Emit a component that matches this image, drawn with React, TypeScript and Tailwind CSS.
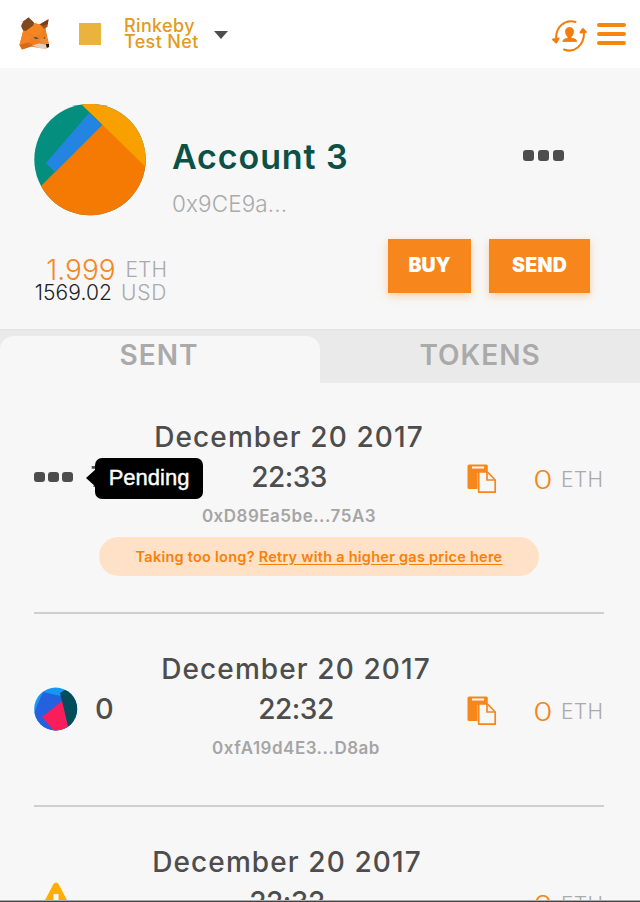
import type { ReactNode } from 'react'

type TxProps = {
    icon: ReactNode,
    leftWidth: string,
    time: string,
    hash: string,
    showRetry?: boolean,
    hideCopy?: boolean
}

const Fox = () => (
    <svg width="32" height="34" viewBox="0 0 32 34">
        <path d="M4.300 13 14 6 21 7.300 26 9 27.500 16 30 27 29.500 30.500 27 31.500 20 31 12 29.500 3 32.500.500 28Z" fill="#ee7f22" />
        <path d="M2 9 4.300 4.300 9.500.3 15 5.500 14.500 8.500 7 14 4 13.500Z" fill="#81481f" />
        <path d="M29.500 2.300 28.500 9.500 25.700 12 20.500 7.500Z" fill="#a2531f" />
        <path d="M29.500 2.300 28.800 7 25 8.500 20.500 7.500Z" fill="#794018" />
        <path d="M15 6 20.500 7.500 24 11 22 17 15 19 7 14 14.500 8.500Z" fill="#f6861f" />
        <path d="M4.300 13.500 9 15 13 20 9 27 .5 28Z" fill="#f48423" />
        <path d="M.5 28 9 25.500 15 28.500 3 32.500Z" fill="#d8691d" />
        <path d="M20 23 24 20 27.500 20 29.500 27 24 27Z" fill="#f58a2c" />
        <path d="M13 28.500 20 26.500 27 27.500 27.500 31.500 20 31Z" fill="#dccfc5" />
        <path d="M14.800 20 18 20.200 19.500 22 16 22Z" fill="#4b5261" />
        <path d="M24.500 20.500 26.500 20.200 26 21.700 24.500 21.500Z" fill="#4b5261" />
        <path d="M26.800 27 30 27 30 30 28 30.800Z" fill="#171717" />
    </svg>
)

const SwitchAccountIcon = () => (
    <svg width="36" height="34" viewBox="0 0 36 34" fill="none" stroke="#f37d0b" strokeWidth="2" strokeLinecap="round" strokeLinejoin="round">
        <path d="M23.500 3C13-.200 3.500 8 4.200 20" />
        <path d="M1 20.500 4.300 23.500 6.500 19.500Z" fill="#f37d0b" />
        <path d="M12 30.500C22 34.500 32 26.500 32 14" />
        <path d="M28.500 13.500 30.800 10 33.800 13Z" fill="#f37d0b" />
        <path d="M17.500 8.500C14.500 8.500 13.300 10.500 13.500 13 13.700 15.500 15 17.500 16 18V19.200L12.500 20Q11 20.700 10.800 22.500H24.700Q24.500 20.700 23 20L19 19.200V18C20 17.500 21.300 15.500 21.500 13 21.700 10.500 20.500 8.500 17.500 8.500Z" fill="#f37d0b" strokeWidth=".8" />
    </svg>
)

const AccountAvatar = () => (
    <svg width="112" height="112" viewBox="0 0 112 112">
        <clipPath id="account">
            <circle cx="56" cy="55.500" r="55.700" />
        </clipPath>
        <g clipPath="url(#account)">
            <rect width="112" height="112" fill="#048e7e" />
            <path d="M7 82 74 15 130 71V120H0Z" fill="#f47a04" />
            <path d="M55 9 68 21 21 68 12 59Z" fill="#2484e1" />
            <path d="M46 -1 120 71V-1Z" fill="#f7a000" />
        </g>
    </svg>
)

const TxAvatar = () => (
    <svg width="44" height="44" viewBox="0 0 44 44">
        <clipPath id="tx">
            <circle cx="21.700" cy="22" r="21.500" />
        </clipPath>
        <g clipPath="url(#tx)">
            <rect width="44" height="44" fill="#1598f2" />
            <path d="M9 5 27 9 44 44H0V26Z" fill="#2560df" />
            <path d="M26 6 36 0H44V36L34 40Z" fill="#034d5a" />
            <path d="M28 14 34 40 34 46H22L8 30Z" fill="#fa1d5b" />
        </g>
    </svg>
)

const CopyIcon = () => (
    <svg width="30" height="30" viewBox="0 0 30 30">
        <path d="M2 .5H19.500Q20.800.500 20.800 2V8H12Q10.500 8 10.500 9.500V25H2Q.500 25 .500 23.500V2Q.500.500 2 .5Z" fill="#f7861c" />
        <path d="M5 2.500H17V4.500H5Z" fill="#f7f7f7" />
        <path d="M11.700 8H20.500L28.200 16V28.200H11.700Z" fill="#f7f7f7" stroke="#f7861c" strokeWidth="1.700" strokeLinejoin="round" />
        <path d="M20 8V16H28.200" fill="none" stroke="#f7861c" strokeWidth="1.700" />
    </svg>
)

const Dots = ({ small }: { small?: boolean }) => (
    <div className={small ? 'flex gap-[3.500px]' : 'flex gap-[4px]'}>
        {[0, 1, 2].map((dot) => (
            <span key={dot} className={small ? 'size-[10.500px] rounded-[3px] bg-[#4d4d4d]' : 'size-[11px] rounded-[3px] bg-[#4d4d4d]'} />
        ))}
    </div>
)

const Transaction = ({ icon, leftWidth, time, hash, showRetry, hideCopy }: TxProps) => (
    <div className="mr-[36px] ml-[34px] h-[193px] shrink-0 border-b-2 border-[#cfcfcf] pt-[35px] data-[retry=true]:h-[231px] data-[retry=true]:pt-[34px]" data-retry={!!showRetry}>
        <div className="flex">
            <div className={`${leftWidth} flex h-[120px] shrink-0 items-center`}>{icon}</div>
            <div className="flex w-[280px] shrink-0 flex-col items-center whitespace-nowrap font-medium text-[#4d4d4d]">
                <span className="text-[28px] leading-10 tracking-[1.1px]">December 20 2017</span>
                <span className="text-[28px] leading-10 tracking-[-0.5px]">{time}</span>
                <span className="text-[17px] leading-[39px] font-semibold tracking-[0.5px] text-[#a5a5a5]">{hash}</span>
            </div>
            <div className="ml-auto flex h-[123px] items-center">
                {!hideCopy && <CopyIcon />}
                <span className="mt-[2px] ml-[37px] w-[18px] scale-x-120 text-center text-[26px] font-light text-[#f7861c]">0</span>
                <span className="mt-[2px] ml-[9px] w-[43px] text-[21px] font-light tracking-[0.3px] text-[#aaa]">ETH</span>
            </div>
        </div>
        {showRetry && <div className="-mt-[3px] ml-[65px] flex h-[39px] w-[440px] items-center justify-center rounded-full bg-[#ffe1c7] text-[14.500px] font-semibold tracking-[0.25px] whitespace-nowrap text-[#f98008]">
            Taking too long?&nbsp;<span className="underline underline-offset-2">Retry with a higher gas price here</span>
        </div>}
    </div>
)

export default function App() {
    return (
        <div className="flex h-[902px] w-[640px] flex-col overflow-hidden bg-[#f7f7f7] font-['Inter',sans-serif]">
            <header className="flex h-[68px] shrink-0 items-center bg-white pl-[19px]">
                <Fox />
                <div className="ml-7 size-[22px] bg-[#e9b33e]" />
                <div className="ml-[23px] w-[78px] text-[18px] leading-4 font-medium tracking-[0.35px] whitespace-nowrap text-[#e39a20]">
                    Rinkeby<br />Test Net
                </div>
                <div className="mt-[2px] ml-3 h-0 w-0 border-x-[7px] border-t-8 border-x-transparent border-t-[#4d4d4d]" />
                <div className="mt-1 ml-auto"><SwitchAccountIcon /></div>
                <div className="mr-[14px] ml-[9px] flex w-[29px] flex-col gap-[5.500px]">
                    <span className="h-[3.500px] rounded bg-[#f7860f]" />
                    <span className="h-[3.500px] rounded bg-[#f7860f]" />
                    <span className="h-[3.500px] rounded bg-[#f7860f]" />
                </div>
            </header>
            <section className="h-[261px] shrink-0 pt-9 pl-[34px]">
                <div className="flex h-[112px]">
                    <AccountAvatar />
                    <div className="ml-[26px] w-[351px] pt-[33px] whitespace-nowrap">
                        <h1 className="text-[34px] leading-10 font-semibold tracking-[0.9px] text-[#0c5146]">Account 3</h1>
                        <p className="mt-[13px] text-[22.500px] leading-7 font-light tracking-[0.1px] text-[#aaa]">0x9CE9a...</p>
                    </div>
                    <div className="pt-[46px]"><Dots /></div>
                </div>
                <div className="mt-[23px] flex">
                    <div className="w-[133px] pt-[19px] font-light whitespace-nowrap">
                        <div className="flex h-[23px] items-center justify-end leading-none">
                            <span className="text-[28px] text-[#f7861c]">1.999</span>
                            <span className="ml-[10px] text-[21px] text-[#aaa]">ETH</span>
                        </div>
                        <div className="flex h-[23px] items-center justify-end leading-none">
                            <span className="text-[21px] tracking-[0.1px] text-[#222]">1569.02</span>
                            <span className="ml-[9px] text-[21px] tracking-[0.7px] text-[#aaa]">USD</span>
                        </div>
                    </div>
                    <button className="ml-[221px] h-[54px] w-[83px] bg-[#f7861c] text-[19.500px] font-black text-white shadow-[0_3px_8px_rgba(247,134,28,0.35)]">BUY</button>
                    <button className="ml-[18px] h-[54px] w-[101px] bg-[#f7861c] text-[19.500px] font-black tracking-[0.3px] text-white shadow-[0_3px_8px_rgba(247,134,28,0.35)]">SEND</button>
                </div>
            </section>
            <nav className="flex h-[54px] shrink-0 border-t border-[#e2e2e2] bg-[#eaeaea] text-center text-[28px] leading-[38px] font-semibold tracking-[1px] text-[#aaa]">
                <div className="mt-[6px] w-[320px] rounded-t-[14px] bg-[#f7f7f7] pr-[2px]">SENT</div>
                <div className="mt-[6px] w-[320px]">TOKENS</div>
            </nav>
            <main className="flex h-[517px] shrink-0 flex-col overflow-hidden">
                <Transaction
                    leftWidth="w-[115px]"
                    time="22:33"
                    hash="0xD89Ea5be...75A3"
                    showRetry
                    icon={<div className="relative flex items-center">
                        <Dots small />
                        <span className="ml-[18px] text-[28px] font-medium text-[#4d4d4d]">7</span>
                        <div className="absolute top-[2px] left-[61px] flex h-[41px] w-[108px] items-center justify-center rounded-[7px] bg-black pb-[3px] font-['Liberation_Sans',sans-serif] text-[22px] text-white [-webkit-text-stroke:0.4px_white]">
                            <span className="absolute top-[11px] -left-[9px] border-y-[9px] border-r-[10px] border-y-transparent border-r-black" />
                            Pending
                        </div>
                    </div>}
                />
                <Transaction
                    leftWidth="w-[122px]"
                    time="22:32"
                    hash="0xfA19d4E3...D8ab"
                    icon={<>
                        <TxAvatar />
                        <span className="ml-[17px] text-[29px] font-medium text-[#4d4d4d]">0</span>
                    </>}
                />
                <Transaction
                    leftWidth="w-[113px]"
                    time="22:32"
                    hash="0xfA19d4E3...D8ab"
                    hideCopy
                    icon={<svg className="ml-[9px]" width="26" height="40" viewBox="0 0 26 40">
                        <path d="M10.500 2Q13-1 15.500 2L26 22H0Z" fill="#ffae00" />
                        <path d="M10.500 12H15.500V22H10.500Z" fill="#f7f7f7" />
                    </svg>}
                />
            </main>
            <footer className="h-[2px] shrink-0 border-t border-[#aaa] bg-[#444]" />
        </div>
    )
}
